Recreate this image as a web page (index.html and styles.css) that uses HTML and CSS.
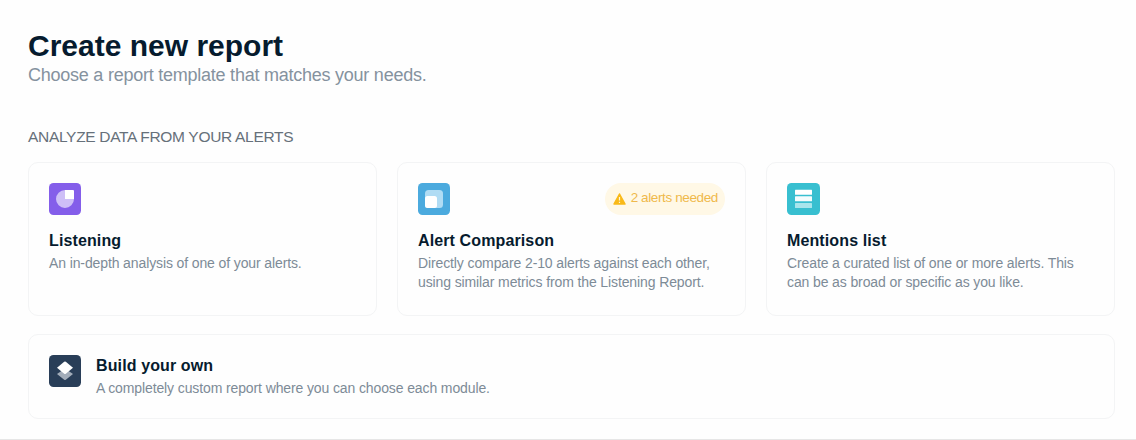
FILE: index.html
```html
<!DOCTYPE html>
<html lang="en">
<head>
<meta charset="utf-8">
<title>Create new report</title>
<link rel="stylesheet" href="styles.css">
</head>
<body>
<main class="page">
  <h1 class="title">Create new report</h1>
  <p class="subtitle">Choose a report template that matches your needs.</p>
  <h2 class="section">ANALYZE DATA FROM YOUR ALERTS</h2>
  <div class="cards">
    <article class="card">
      <div class="card-top">
        <svg class="icon" viewBox="0 0 32 32"><rect width="32" height="32" rx="4.500" fill="#845eea"/><path d="M16 7a9 9 0 1 0 9 9h-9z" fill="#cebff7"/><path d="M16 7h8a1 1 0 0 1 1 1v8h-9z" fill="#fff"/></svg>
      </div>
      <h3 class="name">Listening</h3>
      <p class="text">An in-depth analysis of one of your alerts.</p>
    </article>
    <article class="card">
      <div class="card-top">
        <svg class="icon" viewBox="0 0 32 32"><rect width="32" height="32" rx="4.500" fill="#4baade"/><rect x="7" y="7" width="18" height="18" rx="3.500" fill="#b0dcf4"/><rect x="7" y="13" width="12" height="12" rx="2.500" fill="#fff"/></svg>
        <span class="badge"><svg class="warn" viewBox="0 0 13 12"><path d="M6.500 1 12 11H1z" fill="#f9b917" stroke="#f9b917" stroke-width="1.500" stroke-linejoin="round"/><path d="M6.500 4v3.500M6.500 8.700v1.300" stroke="#fff5dc" stroke-width="1.200"/></svg>2 alerts needed</span>
      </div>
      <h3 class="name">Alert Comparison</h3>
      <p class="text">Directly compare 2-10 alerts against each other,<br>using similar metrics from the Listening Report.</p>
    </article>
    <article class="card">
      <div class="card-top">
        <svg class="icon wide" viewBox="0 0 33 32"><rect width="33" height="32" rx="4.500" fill="#38bfd0"/><rect x="8" y="6.700" width="17" height="5" rx=".5" fill="#fff"/><rect x="8" y="13.300" width="17" height="5" rx=".5" fill="#f4fcfd"/><rect x="8" y="20" width="17" height="5" rx=".5" fill="#a8e5ec"/></svg>
      </div>
      <h3 class="name">Mentions list</h3>
      <p class="text">Create a curated list of one or more alerts. This<br>can be as broad or specific as you like.</p>
    </article>
  </div>
  <article class="card row">
    <svg class="icon" viewBox="0 0 32 32"><rect width="32" height="32" rx="4.500" fill="#293e58"/><path d="M16 13.500 24 19l-7.200 5.700a1.300 1.300 0 0 1-1.600 0L8 19z" fill="#a3adba"/><path d="M15.200 6.800a1.300 1.300 0 0 1 1.600 0L24 12.800l-7.200 5.900a1.300 1.300 0 0 1-1.600 0L8 12.800z" fill="#fff"/></svg>
    <div class="row-body">
      <h3 class="name">Build your own</h3>
      <p class="text">A completely custom report where you can choose each module.</p>
    </div>
  </article>
</main>
</body>
</html>
```
FILE: styles.css
```css
* { box-sizing: border-box; margin: 0; }
body {
  background: #fefefe;
  font-family: "Liberation Sans", Arial, sans-serif;
}
.page {
  height: 440px;
  padding: 28px 21px 0 28px;
  border-bottom: 1px solid #e6e6e6;
}
.title {
  color: #061b2e;
  font-size: 30px;
  line-height: 36px;
}
.subtitle {
  color: #85929e;
  font-size: 18px;
  letter-spacing: -0.24px;
  line-height: 22px;
}
.section {
  margin-top: 41px;
  color: #66707a;
  font-size: 15.5px;
  font-weight: 400;
  letter-spacing: -0.31px;
  line-height: 20px;
}
.cards {
  display: grid;
  grid-template-columns: repeat(3, 1fr);
  gap: 20px;
  margin-top: 15px;
}
.card {
  height: 154px;
  padding: 20px;
  border: 1px solid #f3f4f5;
  border-radius: 10px;
}
.card-top {
  display: flex;
  justify-content: space-between;
  height: 32px;
}
.icon {
  flex: none;
  width: 32px;
  height: 32px;
}
.wide { width: 33px; }
.badge {
  display: flex;
  align-items: center;
  gap: 5px;
  height: 32px;
  padding: 0 7px 3px 8px;
  border-radius: 16px;
  background: #fff8e6;
  color: #efb94b;
  font-size: 13.5px;
  letter-spacing: -0.38px;
}
.warn {
  width: 13px;
  height: 12px;
  margin-top: 3px;
}
.name {
  color: #061b2e;
  font-size: 16px;
  letter-spacing: 0.12px;
  line-height: 20px;
}
.card-top + .name { margin-top: 16px; }
.text {
  margin-top: 3px;
  color: #7d8b97;
  font-size: 14px;
  letter-spacing: -0.115px;
  line-height: 19px;
  white-space: nowrap;
}
.row {
  display: flex;
  gap: 15px;
  height: 85px;
  margin-top: 18px;
}
.row-body { padding-top: 1px; }
```
